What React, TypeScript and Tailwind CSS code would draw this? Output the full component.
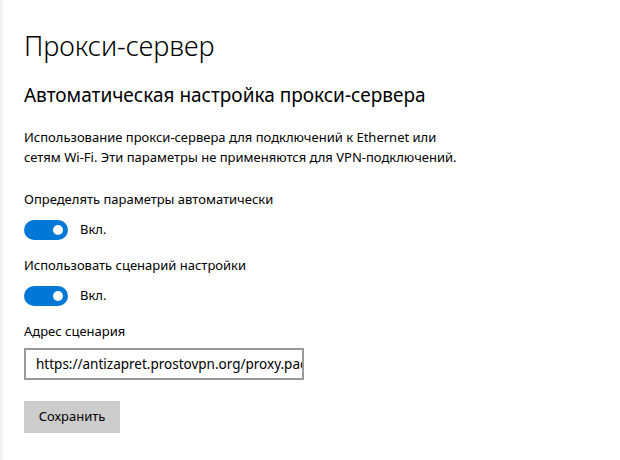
import React from "react";

function Toggle() {
  return (
    <div className="flex items-center gap-3">
      <div className="w-[44px] h-[20px] rounded-full bg-[#0078d7] flex items-center justify-end pr-[5px]">
        <div className="w-[10px] h-[10px] rounded-full bg-white" />
      </div>
      <span className="text-[13px] text-black">Вкл.</span>
    </div>
  );
}

export default function App() {
  return (
    <div
      className="w-[620px] h-[460px] bg-white flex overflow-hidden"
      style={{ fontFamily: '"Noto Sans", "Open Sans", sans-serif' }}
    >
      <div className="w-[3px] bg-[#f2f2f2] shrink-0" />
      <div className="flex flex-col pl-[21px] pt-[28px] text-black">
        <h1 className="text-[27px] font-light leading-[36px]">Прокси-сервер</h1>
        <h2 className="text-[19px] leading-[28px] mt-[17px]">Автоматическая настройка прокси-сервера</h2>
        <p className="text-[13px] leading-[20px] mt-[18px]">
          Использование прокси-сервера для подключений к Ethernet или
          <br />
          сетям Wi-Fi. Эти параметры не применяются для VPN-подключений.
        </p>
        <div className="text-[13px] leading-[20px] mt-[22px]">Определять параметры автоматически</div>
        <div className="mt-[11px]">
          <Toggle />
        </div>
        <div className="text-[13px] leading-[20px] mt-[15px]">Использовать сценарий настройки</div>
        <div className="mt-[11px]">
          <Toggle />
        </div>
        <div className="text-[13px] leading-[20px] mt-[15px]">Адрес сценария</div>
        <div className="mt-[7px] w-[280px] h-[32px] border-2 border-[#999999] flex items-center pl-[10px] overflow-hidden whitespace-nowrap text-[13.5px]">
          https://antizapret.prostovpn.org/proxy.pac
        </div>
        <div className="mt-[21px] w-[96px] h-[32px] bg-[#cccccc] flex items-center justify-center text-[13px]">
          Сохранить
        </div>
      </div>
    </div>
  );
}
